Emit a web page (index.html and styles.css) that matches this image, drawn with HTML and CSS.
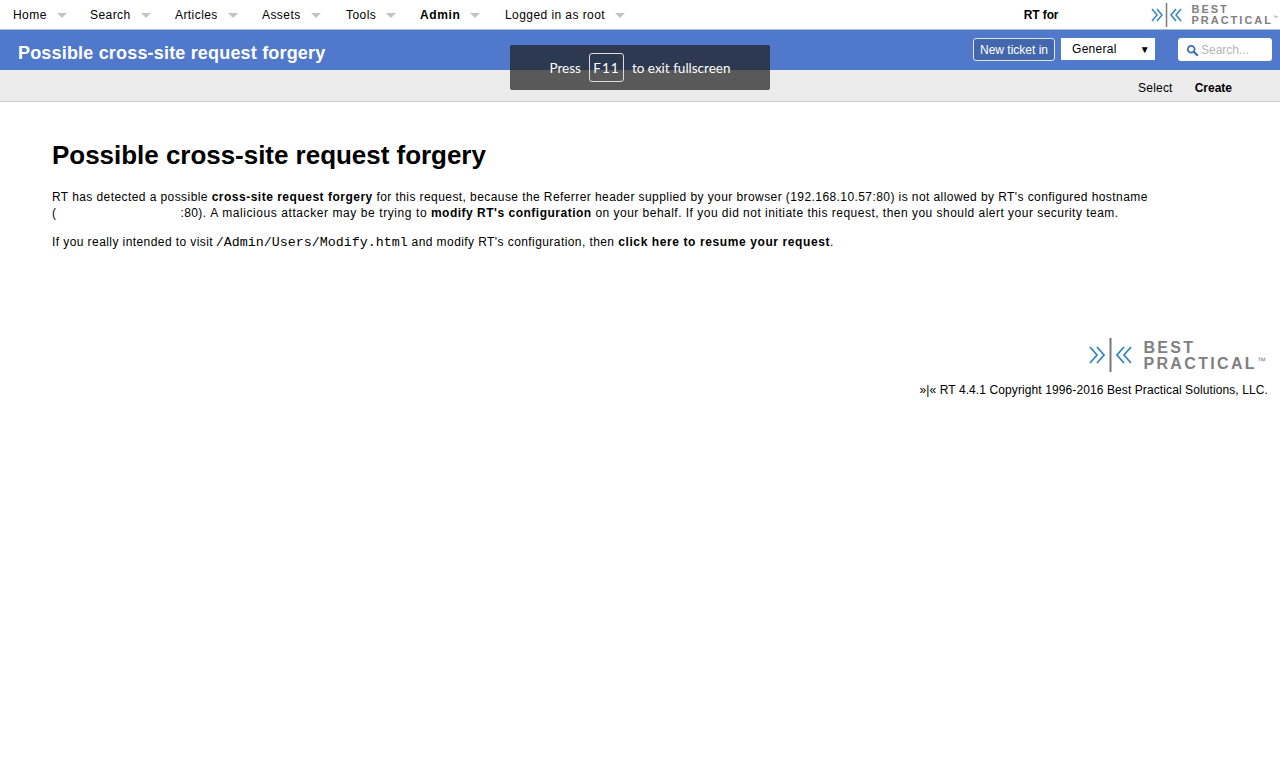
FILE: index.html
```html
<!DOCTYPE html>
<html lang="en">

<head>
    <meta charset="UTF-8">
    <title>Possible cross-site request forgery</title>
    <link rel="stylesheet" href="styles.css">
</head>

<body>
    <div class="topbar">
        <ul class="menu">
            <li class="m-home"><a href="#">Home</a><span class="arrow"></span></li>
            <li class="m-search"><a href="#">Search</a><span class="arrow"></span></li>
            <li class="m-articles"><a href="#">Articles</a><span class="arrow"></span></li>
            <li class="m-assets"><a href="#">Assets</a><span class="arrow"></span></li>
            <li class="m-tools"><a href="#">Tools</a><span class="arrow"></span></li>
            <li class="m-admin current"><a href="#">Admin</a><span class="arrow"></span></li>
            <li class="m-user"><a href="#">Logged in as root</a><span class="arrow"></span></li>
        </ul>
        <div class="rtfor">RT for</div>
        <div class="logo logo-small">
            <svg width="31" height="24" viewBox="0 0 31 24">
                <path d="M1 6l5 6-5 6M6 6l5 6-5 6" fill="none" stroke="#2f86c1" stroke-width="1.5"/>
                <path d="M15.5 0v24" stroke="#777" stroke-width="1.5"/>
                <path d="M25 6l-5 6 5 6M30 6l-5 6 5 6" fill="none" stroke="#2f86c1" stroke-width="1.5"/>
            </svg>
            <div class="logo-text">BEST<br>PRACTICAL<sup>™</sup></div>
        </div>
    </div>

    <div class="titlebar">
        <h1 class="page-title">Possible cross-site request forgery</h1>
        <div class="actions">
            <button class="new-ticket">New ticket in</button>
            <div class="queue"><span>General</span><span class="queue-arrow">▼</span></div>
            <div class="search">
                <svg width="13" height="13" viewBox="0 0 13 13">
                    <circle cx="5.2" cy="5.2" r="3.4" fill="none" stroke="#3f6fb5" stroke-width="1.8"/>
                    <path d="M7.8 7.8l4 4" stroke="#3f6fb5" stroke-width="2.2"/>
                </svg>
                <span>Search...</span>
            </div>
        </div>
    </div>

    <div class="subbar">
        <a href="#">Select</a>
        <a href="#" class="bold">Create</a>
    </div>

    <div class="fullscreen-msg">Press <span class="key">F11</span> to exit fullscreen</div>

    <div class="content">
        <h1>Possible cross-site request forgery</h1>
        <p>RT has detected a possible <b>cross-site request forgery</b> for this request, because the Referrer header supplied by your browser (192.168.10.57:80) is not allowed by RT's configured hostname (<span class="hidden-host"></span>:80). <span class="wide">A malicious attacker may be trying to</span> <b>modify RT's configuration</b> <span class="tail">on your behalf. If you did not initiate this request, then you should alert your security team.</span></p>
        <p>If you really intended to visit <code>/Admin/Users/Modify.html</code> and modify RT's configuration, then <a href="#" class="resume">click here to resume your request</a>.</p>
    </div>

    <div class="footer">
        <div class="logo logo-big">
            <svg width="46" height="34" viewBox="0 0 46 34">
                <path d="M2 9l7 8-7 8M9 9l7 8-7 8" fill="none" stroke="#2f86c1" stroke-width="1.8"/>
                <path d="M22.500 0v34" stroke="#777" stroke-width="2"/>
                <path d="M36 9l-7 8 7 8M43 9l-7 8 7 8" fill="none" stroke="#2f86c1" stroke-width="1.8"/>
            </svg>
            <div class="logo-text">BEST<br>PRACTICAL<sup>™</sup></div>
        </div>
        <p class="copyright">»|« RT 4.4.1 Copyright 1996-2016 Best Practical Solutions, LLC.</p>
    </div>
</body>

</html>
```

FILE: styles.css
```css
* {
    margin: 0;
    padding: 0;
    box-sizing: border-box;
}

body {
    font-family: "Liberation Sans", Arial, sans-serif;
    font-size: 12px;
    color: #000;
    background: #fff;
    position: relative;
    overflow: hidden;
    height: 768px;
}

a {
    color: unset;
    text-decoration: none;
}

.topbar {
    display: flex;
    align-items: center;
    height: 30px;
    border-bottom: 1px solid #b4bdc9;
    padding-left: 13px;
}

.menu {
    display: flex;
    list-style: none;
    letter-spacing: .43px;
}

.menu li {
    display: flex;
    align-items: center;
}

.m-home { width: 77px; }
.m-search { width: 85px; }
.m-articles { width: 87px; }
.m-assets { width: 84px; }
.m-tools { width: 74px; }
.m-admin { width: 85px; }

.current {
    font-weight: bold;
    letter-spacing: .6px;
}

.arrow {
    width: 0;
    height: 0;
    margin: 2px 0 0 10px;
    border-left: 5px solid transparent;
    border-right: 5px solid transparent;
    border-top: 5px solid #c4c4c4;
}

.rtfor {
    margin-left: auto;
    font-weight: bold;
    letter-spacing: -.1px;
}

.logo {
    display: flex;
    align-items: center;
}

.logo-text {
    color: #808080;
    font-weight: bold;
}

.logo-text sup {
    font-size: 5px;
    font-weight: normal;
    letter-spacing: 0;
    vertical-align: 5px;
    line-height: 0;
}

.logo-small {
    margin: 0 2px 0 93px;
}

.logo-small .logo-text {
    font-size: 11px;
    line-height: 11px;
    letter-spacing: 2px;
    margin-left: 9px;
}

.titlebar {
    display: flex;
    align-items: center;
    justify-content: space-between;
    height: 40px;
    background: #5079cc;
    padding: 0 8px 0 18px;
}

.page-title {
    font-size: 18px;
    color: #fff;
    letter-spacing: .18px;
    margin-top: 6px;
}

.actions {
    display: flex;
    align-items: flex-start;
    margin-bottom: 1px;
}

.new-ticket {
    width: 82px;
    height: 23px;
    background: #4367ac;
    border: 1px solid #dfe6f3;
    border-radius: 3px;
    color: #fff;
    font: 12px "Liberation Sans", Arial, sans-serif;
}

.queue {
    display: flex;
    justify-content: space-between;
    align-items: center;
    width: 94px;
    height: 22px;
    margin-left: 6px;
    padding: 0 5px 0 11px;
    background: #fff;
    letter-spacing: .3px;
}

.queue-arrow {
    font-size: 10px;
}

.search {
    display: flex;
    align-items: center;
    gap: 2px;
    width: 94px;
    height: 23px;
    margin-left: 23px;
    padding: 1px 0 0 8px;
    background: #fff;
    border-radius: 3px;
    color: #b5b5b5;
}

.subbar {
    display: flex;
    justify-content: flex-end;
    align-items: center;
    gap: 22px;
    height: 32px;
    background: #ececec;
    border-bottom: 1px solid #ccc;
    padding: 4px 48px 0 0;
    letter-spacing: .2px;
}

.bold {
    font-weight: bold;
    letter-spacing: 0;
}

.fullscreen-msg {
    position: absolute;
    left: 510px;
    top: 45px;
    display: flex;
    align-items: center;
    justify-content: center;
    gap: 8px;
    width: 260px;
    height: 45px;
    background: rgba(32, 32, 32, .72);
    border-radius: 2px;
    color: #fff;
    font-family: Lato, sans-serif;
    font-size: 13.5px;
}

.key {
    display: flex;
    align-items: center;
    justify-content: center;
    width: 35px;
    height: 29px;
    border: 1px solid #ddd;
    border-radius: 3px;
    letter-spacing: 1px;
}

.content {
    padding: 38px 126px 0 52px;
    line-height: 16px;
    letter-spacing: .42px;
}

.content h1 {
    font-size: 26px;
    line-height: 30px;
    letter-spacing: -.03px;
    margin-bottom: 19px;
}

.content p {
    margin-bottom: 13px;
}

.content b {
    letter-spacing: .5px;
}

.wide {
    letter-spacing: .58px;
}

.tail {
    letter-spacing: .48px;
}

.hidden-host {
    display: inline-block;
    width: 124px;
}

code {
    font-family: "Liberation Mono", monospace;
    font-size: 13.33px;
    letter-spacing: 0;
    margin-left: -1px;
}

.resume {
    font-weight: bold;
    letter-spacing: .6px;
}

.footer {
    display: flex;
    flex-direction: column;
    align-items: flex-end;
    padding: 74px 12px 0 0;
}

.logo-big {
    margin: 0 2px 11px 0;
}

.logo-big .logo-text {
    font-size: 16px;
    line-height: 16px;
    letter-spacing: 2.35px;
    margin: 2px 0 0 9px;
}

.logo-big sup {
    font-size: 9px;
}

.copyright {
    letter-spacing: .1px;
}
```
